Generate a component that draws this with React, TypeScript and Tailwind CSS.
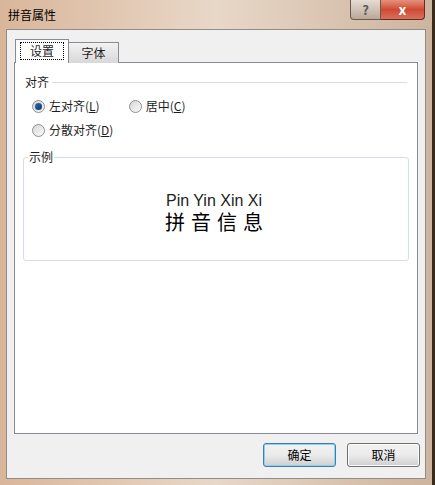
import React from 'react';

const Radio = ({ checked, label, u }: { checked?: boolean; label: string; u: string }) => {
  return (
    <label className="flex items-center gap-[4px]">
      <span className="w-[13px] h-[13px] rounded-full border border-[#8e8f8f] bg-gradient-to-br from-[#d6d6d6] to-[#fbfbfb] flex items-center justify-center">
        {checked && <span className="w-[7px] h-[7px] rounded-full bg-gradient-to-br from-[#2a6ea8] to-[#0d3a66] shadow-[0_0_1px_#5aa0d8]" />}
      </span>
      <span>
        {label}(<span className="underline">{u}</span>)
      </span>
    </label>
  );
};

const Button = ({ children, primary }: { children: React.ReactNode; primary?: boolean }) => {
  return (
    <button
      className={
        'w-[73px] h-[24px] rounded-[3px] border text-[12px] text-black bg-gradient-to-b from-[#f2f2f2] via-[#ebebeb] to-[#cfcfcf] ' +
        (primary ? 'border-[#3c7fb1] shadow-[inset_0_0_0_1px_#8fd0ef]' : 'border-[#707070] shadow-[inset_0_0_0_1px_#fcfcfc]')
      }
    >
      {children}
    </button>
  );
};

export default function App() {
  return (
    <div
      className="w-[435px] h-[485px] flex flex-col px-[6px] pb-[6px] bg-gradient-to-r from-[#d9b69a] via-[#e8d8c8] to-[#cdb49e] border-r-[3px] border-r-[#3a2a1c] text-[12px] text-[#1e1e1e]"
      style={{ fontFamily: '"Noto Sans CJK SC", "Noto Sans", sans-serif' }}
    >
      {/* title bar */}
      <div className="h-[29px] flex items-start justify-between shrink-0">
        <span className="mt-[6px] ml-[2px] text-[12px] text-black">拼音属性</span>
        <div className="flex mr-[1px]">
          <div className="w-[31px] h-[20px] rounded-bl-[4px] border border-t-0 border-[#6b5a4c] bg-gradient-to-b from-[#e6dcd3] to-[#b9a89a] flex items-center justify-center text-[13px] font-bold text-[#5a5a5a]">
            ?
          </div>
          <div className="w-[44px] h-[20px] rounded-br-[4px] border border-l-0 border-t-0 border-[#6b2a20] bg-gradient-to-b from-[#e4907c] via-[#cf4a32] to-[#d8705c] flex items-center justify-center text-[14px] font-bold text-white">
            x
          </div>
        </div>
      </div>

      {/* client area */}
      <div className="flex-1 flex flex-col bg-[#f0f0f0] border border-[#8d8d8d] px-[7px] pt-[9px] pb-[10px]">
        {/* tabs */}
        <div className="flex items-end h-[24px] ml-[1px] relative z-10">
          <div className="h-[24px] w-[54px] bg-white border border-b-0 border-[#898c95] flex items-start justify-center pt-[2px]">
            <span className="border border-dotted border-black px-[9px] leading-[16px]">设置</span>
          </div>
          <div className="h-[21px] w-[50px] bg-gradient-to-b from-[#f2f2f2] to-[#d8d8d8] border border-l-0 border-b-0 border-[#898c95] flex items-center justify-center">
            字体
          </div>
        </div>

        {/* tab page */}
        <div className="h-[372px] -mt-[1px] bg-white border border-[#898c95] px-[8px] pt-[10px]">
          <div className="flex items-center gap-[3px] ml-[2px]">
            <span>对齐</span>
            <div className="flex-1 h-px bg-[#dcdcdc] mr-[2px]" />
          </div>
          <div className="ml-[9px] mt-[6px] flex flex-col gap-[6px]">
            <div className="flex gap-[29px]">
              <Radio checked label="左对齐" u="L" />
              <Radio label="居中" u="C" />
            </div>
            <Radio label="分散对齐" u="D" />
          </div>

          <div className="relative mt-[18px] h-[104px] border border-[#d5dfe5] rounded-[3px]">
            <span className="absolute -top-[9px] left-[4px] bg-white px-[1px] leading-[16px]">示例</span>
            <div className="flex flex-col items-center pt-[35px] mr-[4px]">
              <span className="text-[16px] leading-[16px] text-[#222]" style={{ fontFamily: '"Liberation Sans", sans-serif' }}>
                Pin Yin Xin Xi
              </span>
              <span className="text-[20px] leading-[24px] tracking-[6px] ml-[6px] mt-[1px] text-black">拼音信息</span>
            </div>
          </div>
        </div>

        {/* buttons */}
        <div className="flex justify-end gap-[11px] mt-[9px] -mr-[2px]">
          <Button primary>确定</Button>
          <Button>取消</Button>
        </div>
      </div>
    </div>
  );
}
